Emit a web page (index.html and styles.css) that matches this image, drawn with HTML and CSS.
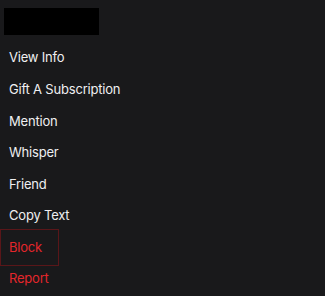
FILE: index.html
```html
<!DOCTYPE html>
<html lang="en">
<head>
    <meta charset="UTF-8">
    <meta name="viewport" content="width=device-width, initial-scale=1.0">
    <title>User Menu</title>
    <link rel="stylesheet" href="styles.css">
</head>
<body>
    <div id="card">
        <div id="header">
            <div id="name-box"></div>
        </div>
        <ul id="menu">
            <li class="item">View Info</li>
            <li class="item">Gift A Subscription</li>
            <li class="item">Mention</li>
            <li class="item">Whisper</li>
            <li class="item">Friend</li>
            <li class="item">Copy Text</li>
            <li class="item danger focused">Block</li>
            <li class="item danger">Report</li>
        </ul>
    </div>
</body>
</html>
```

FILE: styles.css
```css
body{
    margin: 0;
    background-color: #19191b;
    font-family: Inter, "Noto Sans", sans-serif;
    color: #efeff1;
}
#card{
    width: 325px;
    height: 296px;
    overflow: hidden;
}
#header{
    padding: 8px 0 0 4px;
}
#name-box{
    width: 95px;
    height: 27px;
    background-color: #000;
}
#menu{
    list-style: none;
    margin: 7.4px 0 0 0;
    padding: 0;
}
.item{
    height: 31.6px;
    line-height: 31.6px;
    padding-left: 9px;
    font-size: 13px;
    letter-spacing: -0.2px;
    box-sizing: border-box;
}
.danger{
    color: #e3262b;
}
.focused{
    width: 53px;
    height: 31px;
    line-height: 30px;
    margin-left: 3px;
    padding-left: 6px;
    outline: 1px solid #5a1619;
    outline-offset: 2px;
}
```
